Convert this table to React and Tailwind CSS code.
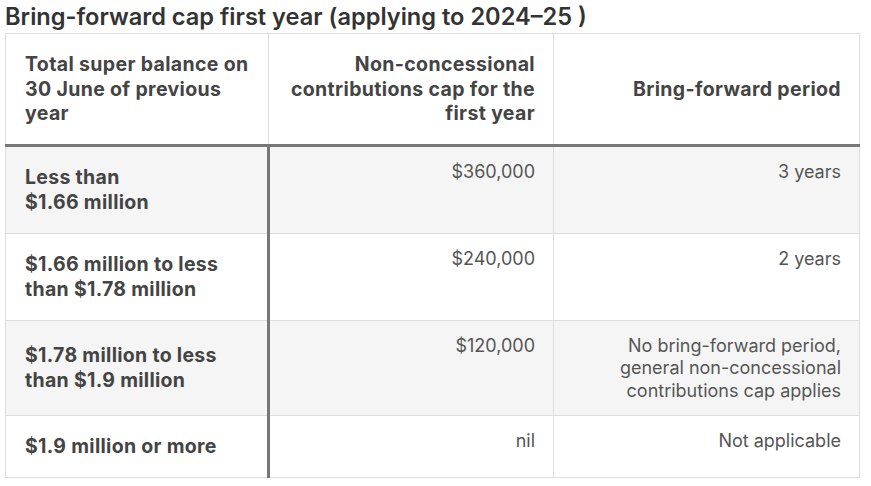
const rows = [
  { range: ["Less than", "$1.66 million"], cap: "$360,000", period: ["3 years"], bg: "bg-[#f5f5f5]" },
  { range: ["$1.66 million to less", "than $1.78 million"], cap: "$240,000", period: ["2 years"], bg: "bg-white" },
  {
    range: ["$1.78 million to less", "than $1.9 million"],
    cap: "$120,000",
    period: ["No bring-forward period,", "general non-concessional", "contributions cap applies"],
    bg: "bg-[#f5f5f5]",
  },
  { range: ["$1.9 million or more"], cap: "nil", period: ["Not applicable"], bg: "bg-white" },
]

function Lines({ items }) {
  return items.map((t, i) => (
    <span key={i} className="block">
      {t}
    </span>
  ))
}

export default function App() {
  return (
    <div className="w-[871px] h-[486px] bg-white font-['Inter',sans-serif] overflow-hidden">
      <h2 className="pl-[5px] text-[23.6px] leading-[33px] font-semibold text-[#333]">
        Bring-forward cap first year (applying to 2024–25 )
      </h2>
      <table className="ml-[5px] w-[854px] border-collapse table-fixed">
        <colgroup>
          <col className="w-[263px]" />
          <col className="w-[285px]" />
          <col className="w-[306px]" />
        </colgroup>
        <thead>
          <tr>
            <th className="border border-[#ddd] border-b-[3px] border-b-[#777] px-[19px] py-[18px] text-left align-middle text-[19.5px] leading-[24.5px] font-bold tracking-[0.35px] text-[#444]">
              Total super balance on 30 June of previous year
            </th>
            <th className="border border-[#ddd] border-b-[3px] border-b-[#777] px-[18px] py-[18px] text-right align-middle text-[19.5px] leading-[24.5px] font-bold tracking-[0.35px] text-[#444]">
              Non-concessional contributions cap for the first year
            </th>
            <th className="border border-[#ddd] border-b-[3px] border-b-[#777] px-[18px] py-[18px] text-right align-middle text-[19.5px] leading-[24.5px] font-bold tracking-[0.35px] text-[#444]">
              Bring-forward period
            </th>
          </tr>
        </thead>
        <tbody>
          {rows.map((r, i) => (
            <tr key={i} className={r.bg}>
              <th className="border border-[#ddd] border-r-[3px] border-r-[#777] px-[19px] py-[18px] text-left align-middle text-[19.5px] leading-[25px] font-bold tracking-[0.3px] text-[#444]">
                <Lines items={r.range} />
              </th>
              <td className="border border-[#ddd] px-[18px] pt-[14px] pb-[13px] text-right align-top text-[18px] leading-[22.5px] text-[#555]">
                {r.cap}
              </td>
              <td className="border border-[#ddd] px-[18px] pt-[14px] pb-[13px] text-right align-top text-[18px] leading-[22.5px] text-[#555]">
                <Lines items={r.period} />
              </td>
            </tr>
          ))}
        </tbody>
      </table>
    </div>
  )
}
